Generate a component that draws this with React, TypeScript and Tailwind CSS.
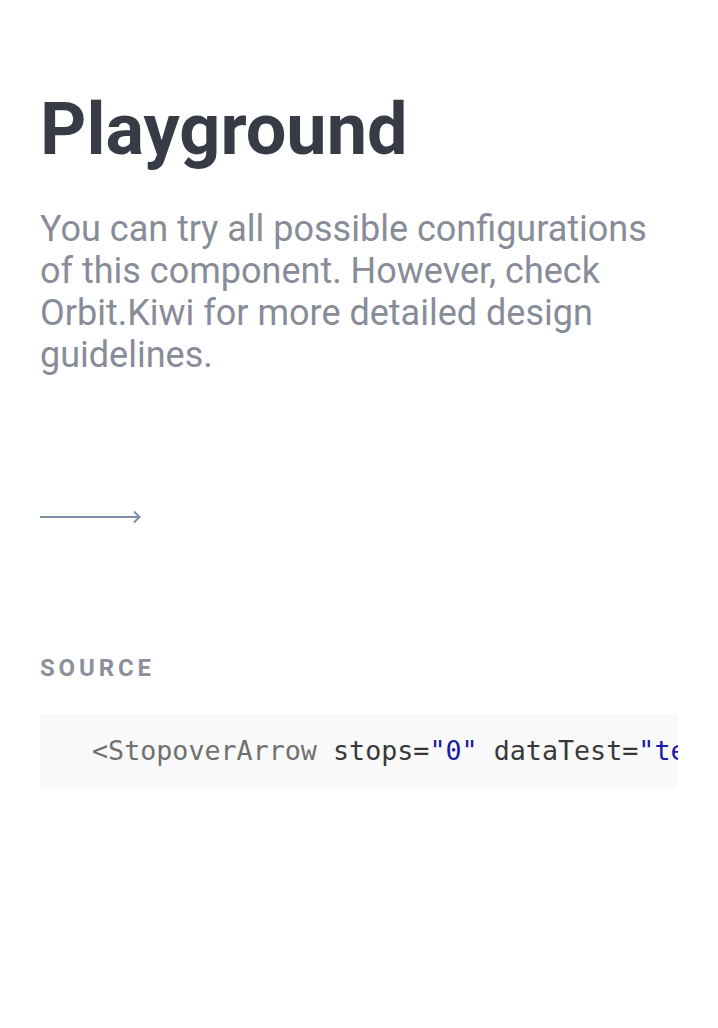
export default function App() {
  return (
    <div className="min-h-screen bg-white px-10 pt-[88px] font-['Roboto',sans-serif]">
      <h1 className="text-[72px] leading-[84px] font-bold text-[#363b46]">Playground</h1>

      <p className="mt-[36px] text-[36px] leading-[42px] text-[#888c98]">
        You can try all possible configurations of this component. However, check
        Orbit.Kiwi for more detailed design guidelines.
      </p>

      <div className="mt-[129px] h-6 flex items-center">
        <svg width="101" height="24" viewBox="0 0 101 24" fill="none">
          <path d="M0 12H99" stroke="#7d8fa6" strokeWidth="2" />
          <path d="M94 6.5L99.5 12L94 17.5" stroke="#7d8fa6" strokeWidth="2" />
        </svg>
      </div>

      <h2 className="mt-[123px] text-[24px] leading-[32px] font-bold tracking-[0.16em] text-[#8c909b]">
        SOURCE
      </h2>

      <div className="mt-[30px] bg-[#f9f9f9] overflow-hidden">
        <pre className="pl-[52px] py-[18px] font-['DejaVu_Sans_Mono',monospace] text-[26.7px] leading-[38px] whitespace-pre">
          <span className="text-[#707070]">&lt;StopoverArrow</span>
          <span className="text-[#383838]"> stops=</span>
          <span className="text-[#1a1aa6]">"0"</span>
          <span className="text-[#383838]"> dataTest=</span>
          <span className="text-[#1a1aa6]">"test"</span>
          <span className="text-[#707070]"> /&gt;</span>
        </pre>
      </div>
    </div>
  );
}
